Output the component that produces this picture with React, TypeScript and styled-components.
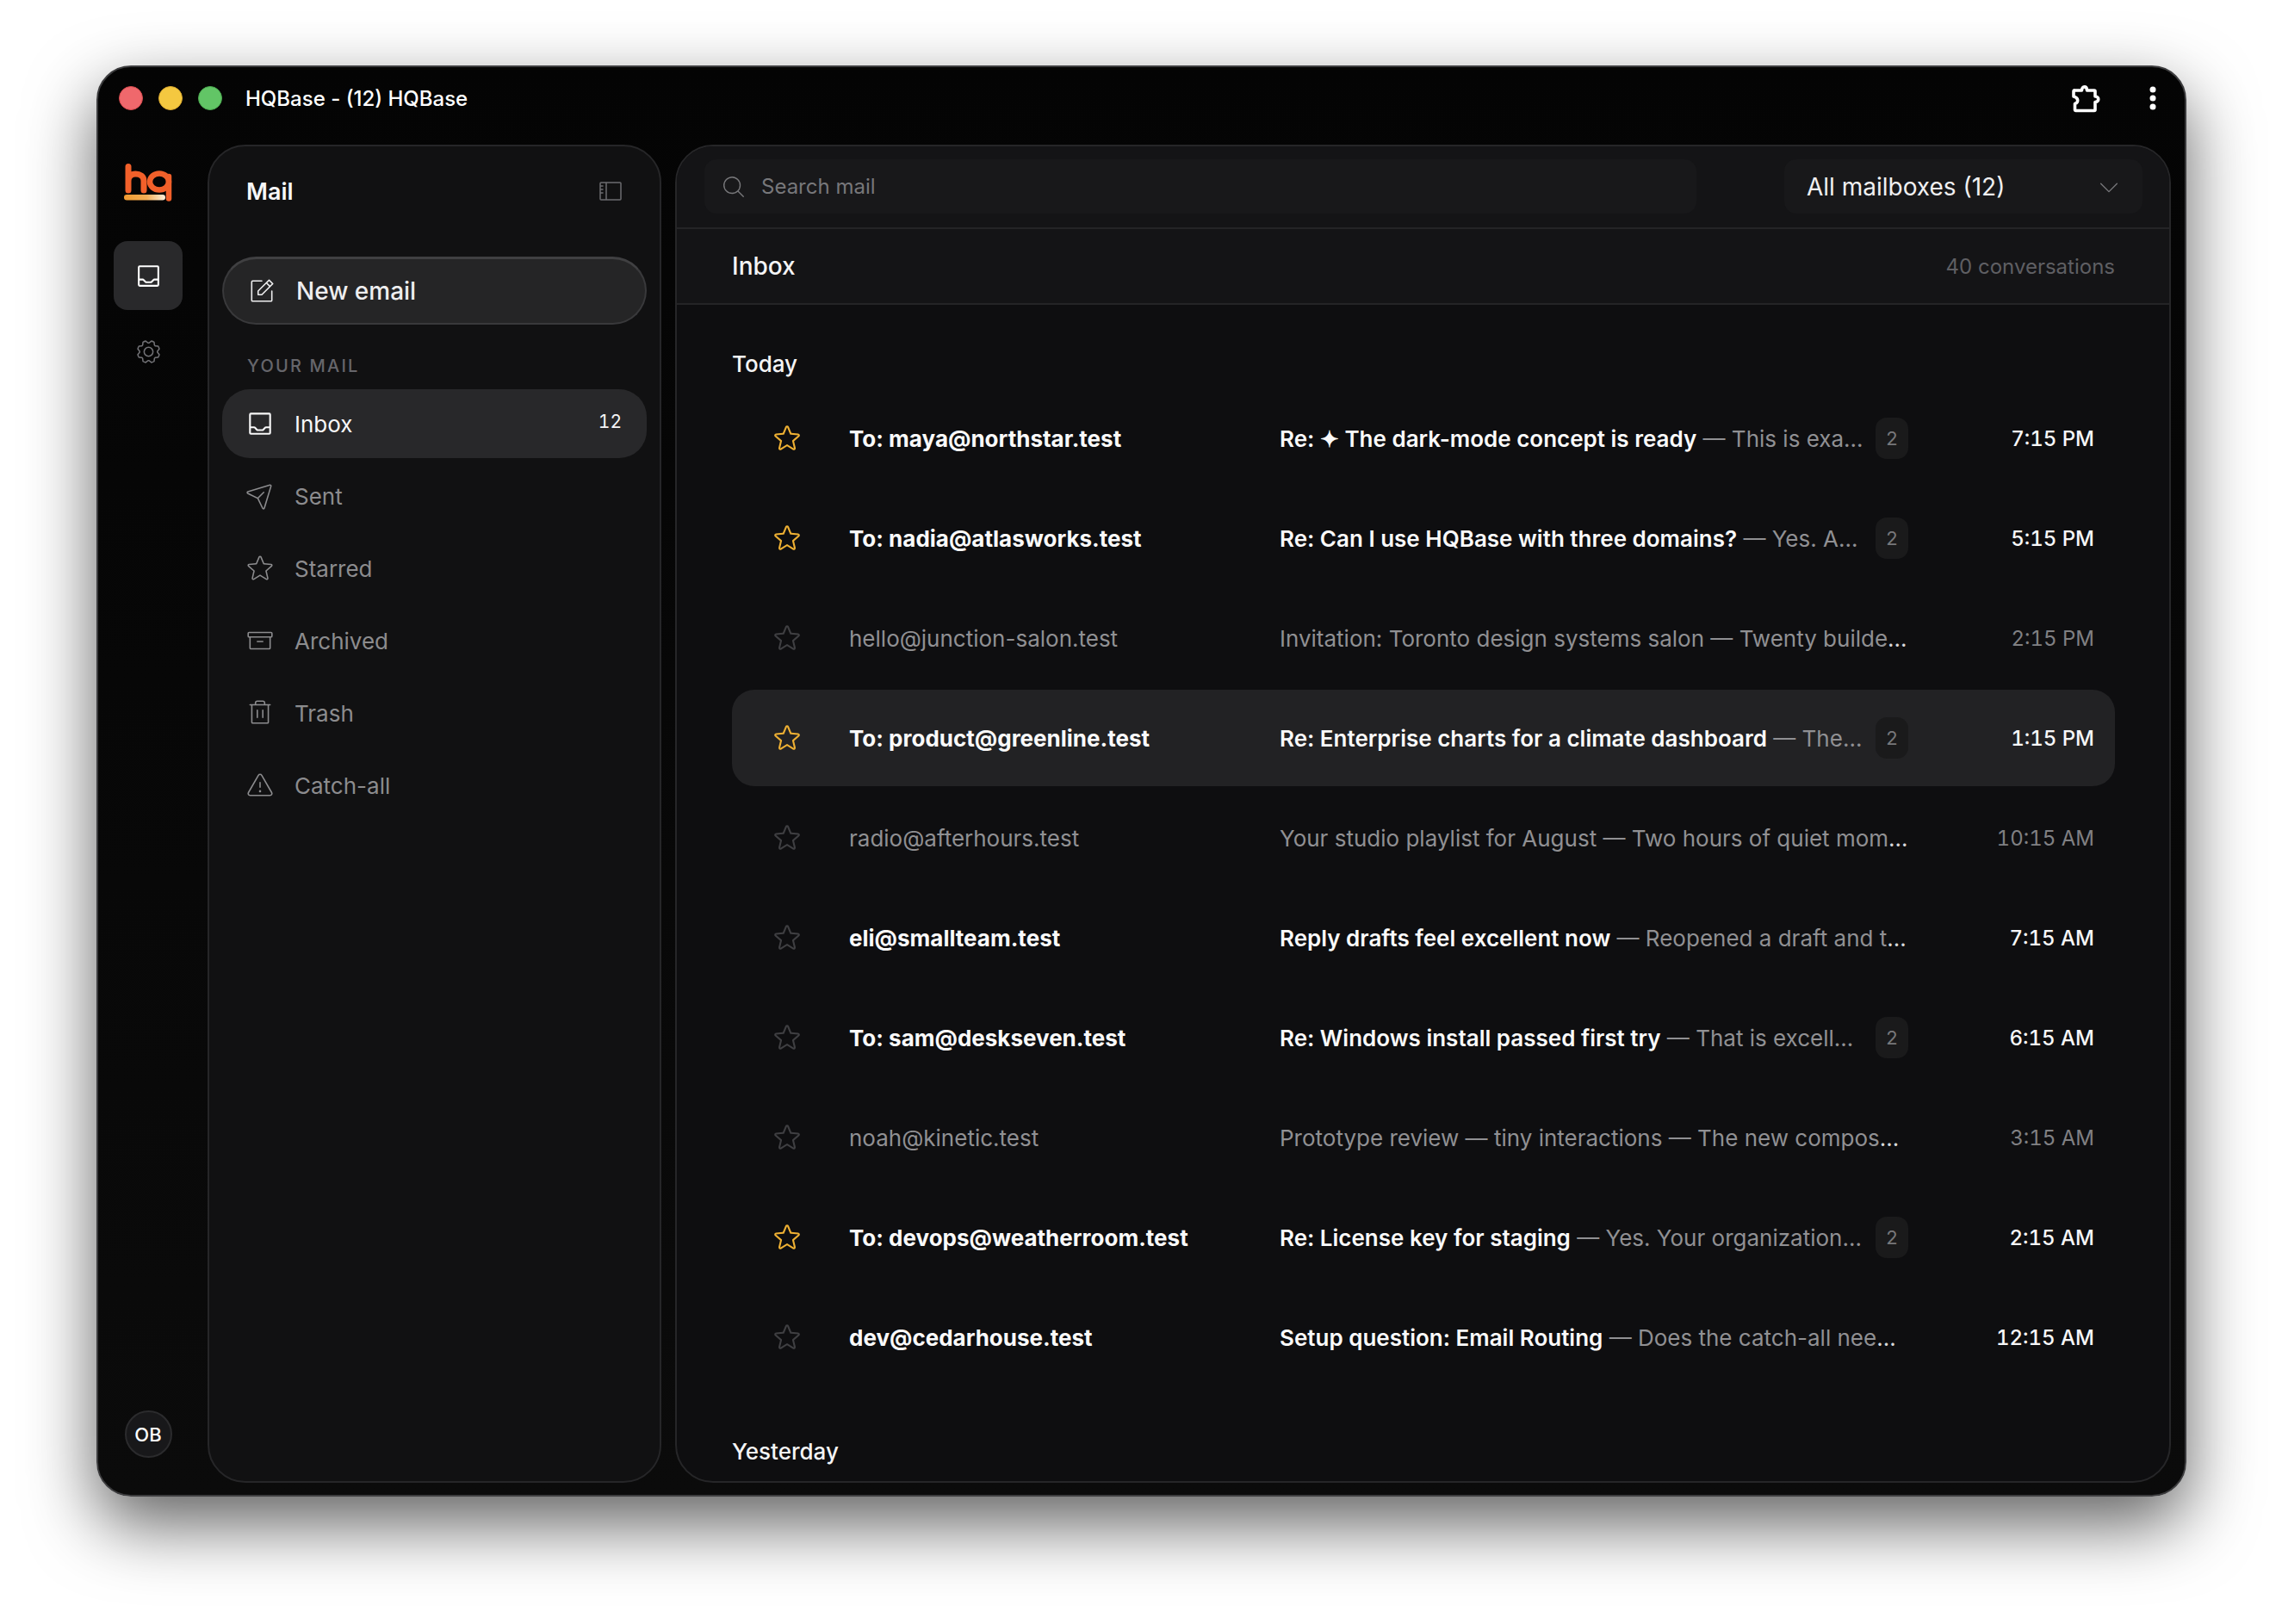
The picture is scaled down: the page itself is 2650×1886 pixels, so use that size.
import React from "react";
import styled, { createGlobalStyle } from "styled-components";
import {
  PiTray,
  PiPaperPlaneTiltLight,
  PiStarLight,
  PiStar,
  PiArchiveLight,
  PiTrashLight,
  PiWarningLight,
  PiNotePencilLight,
  PiGearLight,
  PiSidebarLight,
  PiMagnifyingGlassLight,
  PiCaretDownLight,
} from "react-icons/pi";

const GlobalStyle = createGlobalStyle`
  html, body {
    margin: 0;
    background: #fff;
  }
  body {
    font-family: "Inter", "Liberation Sans", sans-serif;
    color: #f4f4f5;
  }
  * {
    box-sizing: border-box;
  }
`;

const Page = styled.div`
  width: 2650px;
  height: 1886px;
  padding: 76px 111px 148px 112px;
  overflow: hidden;
`;

const Window = styled.div`
  height: 100%;
  display: flex;
  flex-direction: column;
  border: 2px solid #3c3c3e;
  border-radius: 40px;
  background: linear-gradient(#040404, #0b0b0b);
  box-shadow: 0 32px 80px rgba(0, 0, 0, 0.62);
`;

const TitleBar = styled.div`
  height: 72px;
  flex: none;
  display: flex;
  align-items: center;
  padding: 0 33px 0 24px;
`;

const Lights = styled.div`
  display: flex;
  gap: 18px;
  margin-right: 27px;
`;

const Light = styled.span<{ $fill: string; $edge: string }>`
  width: 28px;
  height: 28px;
  border-radius: 50%;
  background: ${(p) => p.$fill};
  border: 1px solid ${(p) => p.$edge};
`;

const WindowTitle = styled.div`
  font-size: 24px;
  font-weight: 500;
  color: #fff;
`;

const TitleActions = styled.div`
  margin-left: auto;
  display: flex;
  align-items: center;
  gap: 57px;
`;

const Body = styled.div`
  flex: 1;
  min-height: 0;
  display: flex;
  padding: 18px 16px 14px 0;
`;

const Rail = styled.nav`
  width: 116px;
  margin-right: 11px;
  flex: none;
  display: flex;
  flex-direction: column;
  align-items: center;
  padding: 22px 0 29px;
`;

const RailLogo = styled.div`
  height: 44px;
  margin-bottom: 46px;
`;

const RailButton = styled.div<{ $active?: boolean }>`
  width: 80px;
  height: 80px;
  margin-bottom: 8px;
  display: flex;
  align-items: center;
  justify-content: center;
  border-radius: 16px;
  background: ${(p) => (p.$active ? "#29292b" : "transparent")};
  color: ${(p) => (p.$active ? "#fff" : "#717175")};
`;

const Avatar = styled.div`
  margin-top: auto;
  width: 55px;
  height: 55px;
  border-radius: 50%;
  display: flex;
  align-items: center;
  justify-content: center;
  background: #18181a;
  border: 2px solid #2b2b2d;
  font-size: 22px;
  font-weight: 500;
  color: #fff;
`;

const SidePanel = styled.aside`
  width: 527px;
  flex: none;
  padding: 0 15px;
  background: #111112;
  border: 2px solid #262628;
  border-radius: 44px;
  margin-right: 16px;
`;

const SideHeader = styled.div`
  height: 104px;
  margin-bottom: 24px;
  padding: 0 26px 0 28px;
  display: flex;
  align-items: center;
  justify-content: space-between;
  color: #6c6c70;
`;

const SideTitle = styled.div`
  font-size: 27px;
  font-weight: 600;
  color: #f7f7f8;
`;

const NewEmail = styled.button`
  width: 100%;
  height: 79px;
  display: flex;
  align-items: center;
  gap: 23px;
  padding: 0 0 0 27px;
  border: 2px solid #39393b;
  border-top: 3px solid #404042;
  border-radius: 40px;
  background: #252526;
  color: #eeeeef;
  font-family: inherit;
  font-size: 28px;
  font-weight: 500;
`;

const SectionLabel = styled.div`
  margin: 33px 0 12px;
  padding-left: 29px;
  height: 30px;
  line-height: 30px;
  font-size: 20px;
  font-weight: 500;
  letter-spacing: 2.2px;
  color: #66666b;
`;

const NavList = styled.div`
  display: flex;
  flex-direction: column;
  gap: 4px;
`;

const NavItem = styled.div<{ $active?: boolean }>`
  height: 80px;
  display: flex;
  align-items: center;
  gap: 23px;
  padding: 0 29px 0 27px;
  border-radius: 32px;
  font-size: 26px;
  background: ${(p) => (p.$active ? "#28282a" : "transparent")};
  color: ${(p) => (p.$active ? "#f7f7f8" : "#8c8c8e")};
`;

const NavCount = styled.span`
  margin-left: auto;
  margin-top: -6px;
  font-size: 21px;
  font-variant-numeric: tabular-nums;
  color: #f4f4f5;
`;

const MainPanel = styled.main`
  flex: 1;
  min-width: 0;
  display: flex;
  flex-direction: column;
  overflow: hidden;
  background: #0e0e10;
  border: 2px solid #262628;
  border-radius: 44px;
`;

const SearchBar = styled.div`
  height: 96px;
  flex: none;
  display: flex;
  justify-content: space-between;
  padding: 15px 31px 16px 32px;
  background: #141416;
  border-bottom: 2px solid #242426;
`;

const SearchBox = styled.div`
  width: 1152px;
  display: flex;
  align-items: center;
  gap: 17px;
  padding-left: 19px;
  border-radius: 14px;
  background: #18181a;
  font-size: 24px;
  color: #77777a;
`;

const MailboxSelect = styled.div`
  width: 416px;
  display: flex;
  align-items: center;
  justify-content: space-between;
  padding: 0 24px 0 26px;
  border-radius: 14px;
  background: #18181a;
  font-size: 28px;
  color: #f0f0f1;
`;

const ListHeader = styled.div`
  height: 88px;
  flex: none;
  display: flex;
  align-items: center;
  justify-content: space-between;
  padding: 0 63px 0 64px;
  background: #141416;
  border-bottom: 2px solid #242426;
`;

const ListTitle = styled.div`
  font-size: 28px;
  font-weight: 500;
  color: #f4f4f5;
`;

const ListCount = styled.div`
  font-size: 24px;
  color: #5f5f63;
`;

const ListBody = styled.div`
  flex: 1;
  min-height: 0;
  padding: 53px 63px 0 64px;
`;

const DayLabel = styled.div<{ $gap: number }>`
  height: 32px;
  line-height: 32px;
  margin-top: ${(p) => p.$gap}px;
  margin-bottom: 14px;
  font-size: 26px;
  font-weight: 500;
  color: #f4f4f5;
`;

const Rows = styled.div`
  display: flex;
  flex-direction: column;
  gap: 4px;
`;

const Row = styled.div<{ $selected?: boolean }>`
  height: 112px;
  display: grid;
  grid-template-columns: 136px 500px 730px 1fr;
  align-items: center;
  padding-right: 24px;
  border-radius: 26px;
  background: ${(p) => (p.$selected ? "#222224" : "transparent")};
`;

const StarCell = styled.div<{ $on?: boolean }>`
  padding-left: 47px;
  display: flex;
  color: ${(p) => (p.$on ? "#eeb033" : "#3f3f42")};
`;

const Sender = styled.div<{ $unread?: boolean }>`
  font-size: 26px;
  font-weight: ${(p) => (p.$unread ? 700 : 400)};
  color: ${(p) => (p.$unread ? "#fafafa" : "#909093")};
`;

const SubjectCell = styled.div`
  display: flex;
  align-items: center;
  justify-content: space-between;
  font-size: 26px;
  white-space: nowrap;
`;

const SubjectText = styled.span<{ $unread?: boolean }>`
  font-weight: ${(p) => (p.$unread ? 600 : 400)};
  color: ${(p) => (p.$unread ? "#fafafa" : "#909093")};
`;

const Preview = styled.span`
  color: #909093;
`;

const Dots = styled.span`
  color: #d8d8da;
`;

const ThreadCount = styled.span`
  width: 38px;
  height: 48px;
  display: flex;
  align-items: center;
  justify-content: center;
  border-radius: 13px;
  background: #1a1a1b;
  font-size: 22px;
  color: #77777a;
`;

const Time = styled.div<{ $unread?: boolean }>`
  text-align: right;
  font-size: 24px;
  font-weight: ${(p) => (p.$unread ? 500 : 400)};
  font-variant-numeric: tabular-nums;
  color: ${(p) => (p.$unread ? "#f7f7f8" : "#808083")};
`;

const Logo = () => (
  <svg width="56" height="44" viewBox="0 0 56 44" fill="none">
    <defs>
      <linearGradient id="hqbar" x1="0" x2="1" y1="0" y2="0">
        <stop offset="0" stopColor="#f09a30" />
        <stop offset="0.55" stopColor="#f5ae56" />
        <stop offset="1" stopColor="#fdf0dc" />
      </linearGradient>
    </defs>
    <path
      d="M5 3.500V31M5 20c0-5 3.500-8 8.500-8s9.500 3 9.500 8v11"
      stroke="#f2602a"
      strokeWidth="7"
      strokeLinecap="round"
    />
    <ellipse cx="41" cy="21" rx="11" ry="9.500" stroke="#f2602a" strokeWidth="6.500" />
    <path d="M52 15V40.500" stroke="#f2602a" strokeWidth="6.500" strokeLinecap="round" />
    <rect x="0" y="36" width="48" height="6.500" rx="3.200" fill="url(#hqbar)" />
  </svg>
);

const PuzzleIcon = () => (
  <svg width="34" height="34" viewBox="0 0 34 34" fill="none">
    <path
      d="M4.500 8H12.500C12.500 2.500 18.500 2.500 18.500 8H27A1 1 0 0 1 28 9V15C33 15 33 21.500 28 21.500V30.500A1 1 0 0 1 27 31.500H5.500A1 1 0 0 1 4.500 30.500V23.500C9 22 9 16.500 3 15V9A1 1 0 0 1 4.500 8Z"
      stroke="#fff"
      strokeWidth="3.600"
      strokeLinejoin="round"
    />
  </svg>
);

const KebabIcon = () => (
  <svg width="8" height="30" viewBox="0 0 8 30" fill="#fff">
    <circle cx="4" cy="5" r="3.500" />
    <circle cx="4" cy="15" r="3.500" />
    <circle cx="4" cy="25" r="3.500" />
  </svg>
);

type Mail = {
  sender: string;
  subject: string;
  preview: string;
  time: string;
  unread?: boolean;
  starred?: boolean;
  thread?: number;
  selected?: boolean;
};

const mails: Mail[] = [
  { sender: "To: maya@northstar.test", subject: "Re: ✦ The dark-mode concept is ready", preview: "This is exa", time: "7:15 PM", unread: true, starred: true, thread: 2 },
  { sender: "To: nadia@atlasworks.test", subject: "Re: Can I use HQBase with three domains?", preview: "Yes. A", time: "5:15 PM", unread: true, starred: true, thread: 2 },
  { sender: "hello@junction-salon.test", subject: "Invitation: Toronto design systems salon", preview: "Twenty builde", time: "2:15 PM" },
  { sender: "To: product@greenline.test", subject: "Re: Enterprise charts for a climate dashboard", preview: "The", time: "1:15 PM", unread: true, starred: true, thread: 2, selected: true },
  { sender: "radio@afterhours.test", subject: "Your studio playlist for August", preview: "Two hours of quiet mom", time: "10:15 AM" },
  { sender: "eli@smallteam.test", subject: "Reply drafts feel excellent now", preview: "Reopened a draft and t", time: "7:15 AM", unread: true },
  { sender: "To: sam@deskseven.test", subject: "Re: Windows install passed first try", preview: "That is excell", time: "6:15 AM", unread: true, thread: 2 },
  { sender: "noah@kinetic.test", subject: "Prototype review — tiny interactions", preview: "The new compos", time: "3:15 AM" },
  { sender: "To: devops@weatherroom.test", subject: "Re: License key for staging", preview: "Yes. Your organization", time: "2:15 AM", unread: true, starred: true, thread: 2 },
  { sender: "dev@cedarhouse.test", subject: "Setup question: Email Routing", preview: "Does the catch-all nee", time: "12:15 AM", unread: true },
];

const folders = [
  { label: "Sent", icon: <PiPaperPlaneTiltLight size={34} /> },
  { label: "Starred", icon: <PiStarLight size={34} /> },
  { label: "Archived", icon: <PiArchiveLight size={34} /> },
  { label: "Trash", icon: <PiTrashLight size={34} /> },
  { label: "Catch-all", icon: <PiWarningLight size={34} /> },
];

const App: React.FC = () => {
  return (
    <Page>
      <GlobalStyle />
      <Window>
        <TitleBar>
          <Lights>
            <Light $fill="#ef686c" $edge="#d94a4e" />
            <Light $fill="#f4c840" $edge="#dcaa2e" />
            <Light $fill="#62c566" $edge="#4aa84e" />
          </Lights>
          <WindowTitle>HQBase - (12) HQBase</WindowTitle>
          <TitleActions>
            <PuzzleIcon />
            <KebabIcon />
          </TitleActions>
        </TitleBar>
        <Body>
          <Rail>
            <RailLogo>
              <Logo />
            </RailLogo>
            <RailButton $active>
              <PiTray size={33} />
            </RailButton>
            <RailButton>
              <PiGearLight size={33} />
            </RailButton>
            <Avatar>OB</Avatar>
          </Rail>
          <SidePanel>
            <SideHeader>
              <SideTitle>Mail</SideTitle>
              <PiSidebarLight size={32} />
            </SideHeader>
            <NewEmail>
              <PiNotePencilLight size={34} />
              New email
            </NewEmail>
            <SectionLabel>YOUR MAIL</SectionLabel>
            <NavList>
              <NavItem $active>
                <PiTray size={34} />
                Inbox
                <NavCount>12</NavCount>
              </NavItem>
              {folders.map((f) => (
                <NavItem key={f.label}>
                  {f.icon}
                  {f.label}
                </NavItem>
              ))}
            </NavList>
          </SidePanel>
          <MainPanel>
            <SearchBar>
              <SearchBox>
                <PiMagnifyingGlassLight size={30} />
                Search mail
              </SearchBox>
              <MailboxSelect>
                All mailboxes (12)
                <PiCaretDownLight size={30} color="#77777a" />
              </MailboxSelect>
            </SearchBar>
            <ListHeader>
              <ListTitle>Inbox</ListTitle>
              <ListCount>40 conversations</ListCount>
            </ListHeader>
            <ListBody>
              <DayLabel $gap={0}>Today</DayLabel>
              <Rows>
                {mails.map((m) => (
                  <Row key={m.sender} $selected={m.selected}>
                    <StarCell $on={m.starred}>
                      <PiStar size={34} />
                    </StarCell>
                    <Sender $unread={m.unread}>{m.sender}</Sender>
                    <SubjectCell>
                      <span>
                        <SubjectText $unread={m.unread}>{m.subject}</SubjectText>
                        <Preview>
                          {" — "}
                          {m.preview}
                        </Preview>
                        {m.thread ? <Preview>…</Preview> : <Dots>…</Dots>}
                      </span>
                      {m.thread ? <ThreadCount>{m.thread}</ThreadCount> : null}
                    </SubjectCell>
                    <Time $unread={m.unread}>{m.time}</Time>
                  </Row>
                ))}
              </Rows>
              <DayLabel $gap={61}>Yesterday</DayLabel>
            </ListBody>
          </MainPanel>
        </Body>
      </Window>
    </Page>
  );
};

export default App;
